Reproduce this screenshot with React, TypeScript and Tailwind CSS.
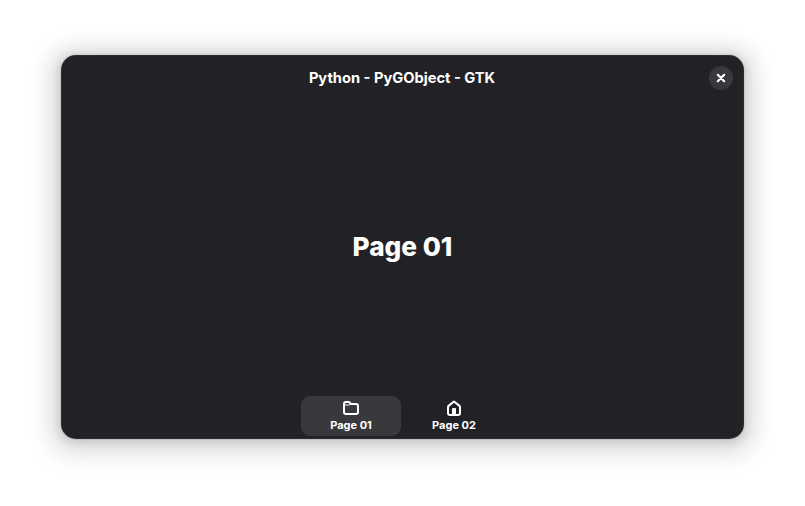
import React from 'react';

function FolderIcon() {
  return (
    <svg width="16" height="16" viewBox="0 0 16 16" fill="none" stroke="#fff" strokeWidth="2">
      <path d="M1 5V4a2 2 0 0 1 2-2h2.6c.6 0 .9.2 1.2.6L8 4h5a2 2 0 0 1 2 2v6a2 2 0 0 1-2 2H3a2 2 0 0 1-2-2Z" />
      <path d="M1 5h5.2L8 4" strokeWidth="1" />
    </svg>
  );
}

function HomeIcon() {
  return (
    <svg width="16" height="16" viewBox="0 0 16 16" fill="none" stroke="#fff" strokeWidth="2" strokeLinejoin="round">
      <path d="M2 7.2c0-.7.3-1.2.8-1.6L8 1.5l5.2 4.1c.5.4.8.9.8 1.6V13a2 2 0 0 1-2 2H4a2 2 0 0 1-2-2Z" />
      <path d="M6 15V9a1 1 0 0 1 1-1h2a1 1 0 0 1 1 1v6Z" fill="#fff" stroke="none" />
    </svg>
  );
}

function Tab({ label, active, children }: { label: string; active?: boolean; children: React.ReactNode }) {
  return (
    <button
      className={`flex h-10 w-[100px] flex-col items-center rounded-[9px] pt-1 text-[11px] leading-[14px] font-bold ${
        active ? 'bg-[#39383d]' : ''
      }`}
    >
      {children}
      <span className="mt-[2px] whitespace-nowrap">{label}</span>
    </button>
  );
}

export default function App() {
  return (
    <div className="h-[506px] w-[805px] overflow-hidden bg-white pt-[55px] pl-[61px] font-['Inter',sans-serif] text-white">
      <main className="flex h-[384px] w-[683px] flex-col rounded-[15px] bg-[#222226] shadow-[inset_0_0_0_1px_rgba(255,255,255,0.05),0_2px_8px_2px_rgba(0,0,0,0.12),0_3px_20px_10px_rgba(0,0,0,0.09),0_5px_20px_20px_rgba(0,0,0,0.035),0_0_0_1px_rgba(0,0,0,0.05)]">
        <header className="grid h-[46px] shrink-0 grid-cols-[1fr_auto_1fr] items-center pr-[11px] pl-[10px]">
          <span />
          <h1 className="text-[14.67px] leading-5 font-bold whitespace-nowrap">Python - PyGObject - GTK</h1>
          <button className="flex h-6 w-6 items-center justify-center justify-self-end rounded-full bg-[#39383d]" aria-label="Close">
            <svg width="16" height="16" viewBox="0 0 16 16" stroke="#fff" strokeWidth="2.2" strokeLinecap="round">
              <path d="m4.8 4.8 6.4 6.4M11.2 4.8l-6.4 6.4" />
            </svg>
          </button>
        </header>
        <section className="flex flex-1 items-center justify-center pb-[4px]">
          <h2 className="text-[26.2px] leading-9 font-extrabold">Page 01</h2>
        </section>
        <nav className="flex h-[43px] shrink-0 justify-center gap-[3px]">
          <Tab label="Page 01" active><FolderIcon /></Tab>
          <Tab label="Page 02"><HomeIcon /></Tab>
        </nav>
      </main>
    </div>
  );
}
